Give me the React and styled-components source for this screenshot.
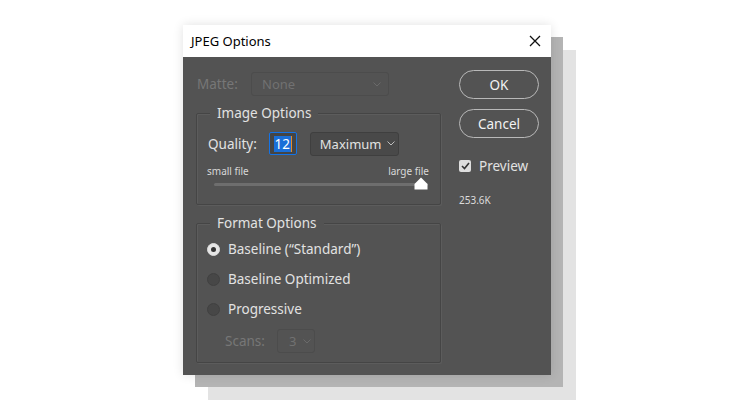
import React from "react";
import styled, { createGlobalStyle } from "styled-components";

const Global = createGlobalStyle`
  html, body { margin: 0; padding: 0; background: #ffffff; }
  body { font-family: "Noto Sans", "Open Sans", sans-serif; }
`;

const Page = styled.div`
  width: 742px;
  height: 416px;
  padding: 25px 0 0 183px;
  box-sizing: border-box;
`;

const Dialog = styled.div`
  width: 368px;
  height: 350px;
  background: #535353;
  display: flex;
  flex-direction: column;
  box-shadow: 0 0 10px rgba(0, 0, 0, 0.12), 12px 12px 0 #b4b4b4, 25px 25px 0 #e3e3e3;
`;

const TitleBar = styled.div`
  height: 32px;
  background: #ffffff;
  display: flex;
  align-items: center;
  justify-content: space-between;
  padding: 0 10px 0 8px;
  font-size: 13px;
  color: #000;
`;

const Body = styled.div`
  flex: 1;
  display: flex;
  gap: 18px;
  padding: 15px 12px 0 13px;
`;

const LeftCol = styled.div`
  width: 245px;
  display: flex;
  flex-direction: column;
`;

const RightCol = styled.div`
  width: 80px;
  display: flex;
  flex-direction: column;
`;

const Row = styled.div`
  display: flex;
  align-items: center;
  height: ${(p) => p.h || 24}px;
  padding-left: ${(p) => p.pl || 0}px;
`;

const Label = styled.span`
  font-size: 13.5px;
  color: ${(p) => (p.disabled ? "#777777" : "#e2e2e2")};
  width: ${(p) => (p.w ? p.w + "px" : "auto")};
`;

const Select = styled.div`
  box-sizing: border-box;
  width: ${(p) => p.w}px;
  height: 24px;
  border: 1px solid ${(p) => (p.disabled ? "#4c4c4c" : "#3f3f3f")};
  border-radius: 3px;
  background: ${(p) => (p.disabled ? "#535353" : "#494949")};
  display: flex;
  align-items: center;
  gap: ${(p) => p.gap || 6}px;
  padding: 0 0 0 ${(p) => p.pl || 10}px;
  font-size: 13px;
  color: ${(p) => (p.disabled ? "#717171" : "#e2e2e2")};
  white-space: nowrap;
  & > span { flex: ${(p) => (p.fill ? 1 : "none")}; }
`;

const Group = styled.div`
  position: relative;
  box-sizing: border-box;
  height: ${(p) => p.h}px;
  margin-top: ${(p) => p.mt}px;
  border: 1px solid #454545;
  border-radius: 2px;
  box-shadow: inset 1px 1px 0 #5c5c5c, 1px 1px 0 #5c5c5c;
  display: flex;
  flex-direction: column;
`;

const Legend = styled.span`
  position: absolute;
  top: -10px;
  left: 13px;
  padding: 0 7px;
  background: #535353;
  font-size: 13.5px;
  color: #e2e2e2;
  line-height: 18px;
`;

const QualityInput = styled.div`
  box-sizing: border-box;
  width: 28px;
  height: 23px;
  margin-left: 12px;
  margin-right: 13px;
  border: 1px solid #1473e6;
  border-radius: 2px;
  background: #454545;
  display: flex;
  align-items: center;
  justify-content: center;
`;

const Selected = styled.span`
  background: #1a6fd8;
  color: #ffffff;
  font-size: 13.5px;
  line-height: 16px;
  padding: 0 1px;
  border-right: 1px solid #e58c2a;
`;

const SliderLabels = styled.div`
  display: flex;
  justify-content: space-between;
  padding: 0 11px 0 10px;
  margin-top: 9px;
  font-size: 10px;
  color: #d8d8d8;
`;

const Track = styled.div`
  position: relative;
  height: 3px;
  margin: 5px 12px 0 17px;
  background: #6e6e6e;
  border-radius: 2px;
`;

const Thumb = styled.svg`
  position: absolute;
  right: 0;
  top: -6px;
`;

const RadioRow = styled.div`
  display: flex;
  align-items: center;
  height: 30px;
  padding-left: 10px;
  gap: 8px;
`;

const RadioDot = styled.span`
  box-sizing: border-box;
  width: 13px;
  height: 13px;
  border-radius: 50%;
  background: ${(p) => (p.on ? "#e6e6e6" : "#474747")};
  border: 1px solid ${(p) => (p.on ? "#dcdcdc" : "#414141")};
  display: flex;
  align-items: center;
  justify-content: center;
  &::after {
    content: "";
    width: 5px;
    height: 5px;
    border-radius: 50%;
    background: ${(p) => (p.on ? "#333" : "transparent")};
  }
`;

const PillButton = styled.div`
  box-sizing: border-box;
  height: 29px;
  margin-top: ${(p) => p.mt}px;
  border: 1px solid #b9b9b9;
  border-radius: 15px;
  display: flex;
  align-items: center;
  justify-content: center;
  font-size: 13.5px;
  color: #f2f2f2;
`;

const CheckRow = styled.div`
  display: flex;
  align-items: center;
  gap: 8px;
  margin-top: 19px;
  font-size: 13.5px;
  color: #e2e2e2;
`;

const CheckBox = styled.span`
  width: 12px;
  height: 12px;
  border-radius: 2px;
  background: #dedede;
  display: flex;
  align-items: center;
  justify-content: center;
`;

const Size = styled.div`
  margin-top: 18px;
  font-size: 10px;
  color: #dcdcdc;
`;

const Chevron = ({ c }) => (
  <svg width="8" height="5" viewBox="0 0 8 5">
    <path d="M0.5 0.5 L4 4 L7.5 0.5" fill="none" stroke={c} strokeWidth="1" />
  </svg>
);

export default function App() {
  return (
    <Page>
      <Global />
      <Dialog>
        <TitleBar>
          <span>JPEG Options</span>
          <svg width="12" height="12" viewBox="0 0 12 12">
            <path d="M1 1 L11 11 M11 1 L1 11" stroke="#111" strokeWidth="1.3" />
          </svg>
        </TitleBar>
        <Body>
          <LeftCol>
            <Row>
              <Label disabled w={54} style={{ paddingLeft: 1 }}>Matte:</Label>
              <Select w={138} disabled fill>
                <span>None</span>
                <Chevron c="#6a6a6a" />
                <i style={{ width: 1 }} />
              </Select>
            </Row>
            <Group h={92} mt={17}>
              <Legend>Image Options</Legend>
              <Row h={23} pl={11} style={{ marginTop: 18 }}>
                <Label>Quality:</Label>
                <QualityInput>
                  <Selected>12</Selected>
                </QualityInput>
                <Select w={89} pl={9} gap={6}>
                  <span>Maximum</span>
                  <Chevron c="#bdbdbd" />
                </Select>
              </Row>
              <SliderLabels>
                <span>small file</span>
                <span>large file</span>
              </SliderLabels>
              <Track>
                <Thumb width="14" height="13" viewBox="0 0 14 13">
                  <path d="M7 0.5 L13.5 7 L13.5 12.5 L0.5 12.5 L0.5 7 Z" fill="#ffffff" />
                </Thumb>
              </Track>
            </Group>
            <Group h={140} mt={18}>
              <Legend>Format Options</Legend>
              <div style={{ height: 10 }} />
              <RadioRow>
                <RadioDot on />
                <Label>Baseline (“Standard”)</Label>
              </RadioRow>
              <RadioRow>
                <RadioDot />
                <Label>Baseline Optimized</Label>
              </RadioRow>
              <RadioRow>
                <RadioDot />
                <Label>Progressive</Label>
              </RadioRow>
              <Row pl={28} style={{ marginTop: 5 }}>
                <Label disabled w={52}>Scans:</Label>
                <Select w={38} disabled pl={11} gap={7}>
                  <span>3</span>
                  <Chevron c="#6a6a6a" />
                </Select>
              </Row>
            </Group>
          </LeftCol>
          <RightCol>
            <PillButton mt={-2}>OK</PillButton>
            <PillButton mt={10}>Cancel</PillButton>
            <CheckRow>
              <CheckBox>
                <svg width="9" height="8" viewBox="0 0 9 8">
                  <path d="M1 4 L3.5 6.5 L8 1" fill="none" stroke="#333" strokeWidth="1.6" />
                </svg>
              </CheckBox>
              Preview
            </CheckRow>
            <Size>253.6K</Size>
          </RightCol>
        </Body>
      </Dialog>
    </Page>
  );
}
